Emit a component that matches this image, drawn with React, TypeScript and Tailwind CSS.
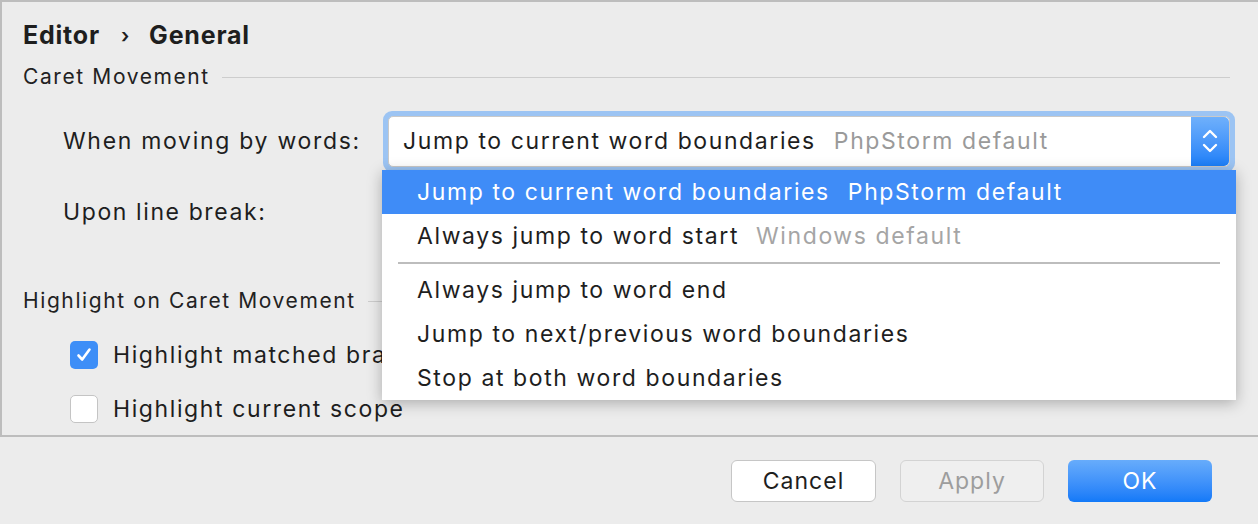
import React from 'react'

const font = { fontFamily: 'Inter, "Noto Sans", sans-serif' }

const menuItems = [
  { label: 'Always jump to word end' },
  { label: 'Jump to next/previous word boundaries' },
  { label: 'Stop at both word boundaries' },
]

function SectionHeader({ title }: { title: string }) {
  return (
    <div className="flex h-[24px] items-center pl-[21px] pr-[28px]">
      <span className="text-[21px] text-[#222] tracking-[1.6px]">{title}</span>
      <div className="ml-[12px] h-px flex-1 bg-[#cdcdcd]" />
    </div>
  )
}

function Checkbox({ checked, label }: { checked: boolean; label: string }) {
  return (
    <div className="flex h-[30px] items-center pl-[68px]">
      {checked ? (
        <div className="flex h-[28px] w-[28px] items-center justify-center rounded-[5px] bg-[#3d8ef7]">
          <svg width="18" height="18" viewBox="0 0 18 18" fill="none">
            <path d="M3.5 9.5 L7.2 13.5 L14.5 3.5" stroke="white" strokeWidth="2.6" strokeLinecap="round" strokeLinejoin="round" />
          </svg>
        </div>
      ) : (
        <div className="h-[28px] w-[28px] rounded-[5px] border border-[#c4c4c4] bg-white" />
      )}
      <span className="ml-[15px] text-[23px] text-[#1e1e1e] tracking-[1.6px]">{label}</span>
    </div>
  )
}

export default function App() {
  return (
    <div className="flex h-[524px] w-[1258px] flex-col overflow-hidden bg-[#ececec]" style={font}>
      <div className="relative flex h-[437px] flex-col border-l-2 border-t-2 border-b-2 border-[#bdbdbd] pt-[19px]">
        <div className="flex h-[30px] items-center pl-[21px] text-[25px] font-bold text-[#1e1e1e] tracking-[0.8px]">
          <span>Editor</span>
          <span className="ml-[21px] text-[20px] font-semibold">›</span>
          <span className="ml-[19px]">General</span>
        </div>

        <div className="mt-[14px]">
          <SectionHeader title="Caret Movement" />
        </div>

        <div className="mt-[21px] flex h-[62px] items-center pl-[61px]">
          <span className="w-[320px] text-[23px] text-[#1e1e1e] tracking-[1.7px]">When moving by words:</span>
          <div className="flex h-[61px] w-[852px] rounded-[9px] bg-[#9cc4f3] p-[5px]">
            <div className="flex flex-1 items-center rounded-[5px] border border-[#c9c9c9] bg-white">
              <span className="ml-[14px] text-[23px] text-[#1e1e1e] tracking-[1.6px]">Jump to current word boundaries</span>
              <span className="ml-[18px] text-[23px] text-[#9a9a9a] tracking-[1.6px]">PhpStorm default</span>
              <div className="ml-auto flex h-full w-[38px] items-center justify-center rounded-r-[5px] bg-gradient-to-b from-[#6fb0fb] to-[#1b7ff8]">
                <svg width="18" height="30" viewBox="0 0 18 30" fill="none">
                  <path d="M3 11 L9 5 L15 11" stroke="white" strokeWidth="2.4" strokeLinecap="round" strokeLinejoin="round" />
                  <path d="M3 19 L9 25 L15 19" stroke="white" strokeWidth="2.4" strokeLinecap="round" strokeLinejoin="round" />
                </svg>
              </div>
            </div>
          </div>
        </div>

        <div className="mt-[20px] flex h-[40px] items-center pl-[61px]">
          <span className="text-[23px] text-[#1e1e1e] tracking-[1.6px]">Upon line break:</span>
        </div>

        <div className="mt-[57px]">
          <SectionHeader title="Highlight on Caret Movement" />
        </div>

        <div className="mt-[27px]">
          <Checkbox checked label="Highlight matched braces" />
        </div>
        <div className="mt-[24px]">
          <Checkbox checked={false} label="Highlight current scope" />
        </div>

        <div className="absolute left-[380px] top-[168px] flex w-[854px] flex-col bg-white shadow-[0_3px_14px_rgba(0,0,0,0.28)]">
          <div className="flex h-[44px] items-center bg-[#3f8cf7] pl-[35px] text-[23px] text-white tracking-[1.6px]">
            <span>Jump to current word boundaries</span>
            <span className="ml-[18px]">PhpStorm default</span>
          </div>
          <div className="flex h-[44px] items-center pl-[35px] text-[23px] tracking-[1.6px]">
            <span className="text-[#1e1e1e]">Always jump to word start</span>
            <span className="ml-[17px] text-[#a5a5a5]">Windows default</span>
          </div>
          <div className="flex h-[10px] items-center px-[16px]">
            <div className="h-[2px] flex-1 bg-[#bdbdbd]" />
          </div>
          {menuItems.map((item) => (
            <div key={item.label} className="flex h-[44px] items-center pl-[35px] text-[23px] text-[#1e1e1e] tracking-[1.6px]">
              {item.label}
            </div>
          ))}
        </div>
      </div>

      <div className="flex flex-1 items-center justify-end gap-[24px] pr-[46px] pt-[1px]">
        <button className="h-[42px] w-[145px] rounded-[6px] border border-[#c6c6c6] bg-white text-[23px] text-[#1e1e1e] tracking-[1px]">
          Cancel
        </button>
        <button className="h-[42px] w-[144px] rounded-[6px] border border-[#d3d3d3] bg-[#efefef] text-[23px] text-[#9d9d9d] tracking-[1px]">
          Apply
        </button>
        <button className="h-[42px] w-[144px] rounded-[6px] bg-gradient-to-b from-[#67acfb] to-[#1179f8] text-[23px] text-white tracking-[1px]">
          OK
        </button>
      </div>
    </div>
  )
}
